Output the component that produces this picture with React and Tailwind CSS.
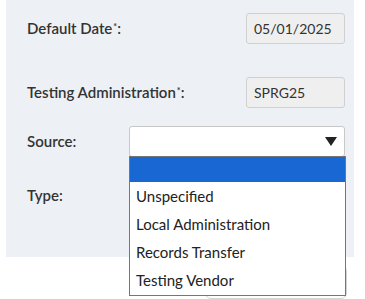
import React from 'react';

const options = ['Unspecified', 'Local Administration', 'Records Transfer', 'Testing Vendor'];

const Label = ({ children, star }) => (
  <span className="text-[15px] font-semibold text-[#333]">
    {children}
    {star && <sup className="text-[9px] ml-[1px]">*</sup>}:
  </span>
);

export default function App() {
  return (
    <div className="relative w-[365px] h-[299px] bg-white overflow-hidden font-['Lato',sans-serif]">
      {/* Form panel */}
      <div className="ml-[6px] w-[348px] h-[257px] bg-[#edf1f5] pl-[21px] pr-[9px]">
        <div className="flex items-center justify-between pt-[13px] h-[44px]">
          <Label star>Default Date</Label>
          <div className="w-[99px] h-[31px] flex items-center px-[7px] rounded-[3px] border border-[#d0d0d0] bg-[#efefef] text-[14px] text-[#333]">
            05/01/2025
          </div>
        </div>
        <div className="flex items-center justify-between mt-[33px] h-[31px]">
          <Label star>Testing Administration</Label>
          <div className="w-[99px] h-[31px] flex items-center px-[7px] rounded-[3px] border border-[#d0d0d0] bg-[#efefef] text-[14px] text-[#333]">
            SPRG25
          </div>
        </div>
        <div className="flex items-center justify-between mt-[18px] h-[31px]">
          <Label>Source</Label>
          <div className="w-[216px] h-[31px] flex items-center justify-end pr-[7px] rounded-[3px] border border-[#c8c8c8] bg-white">
            <svg width="12" height="9" viewBox="0 0 12 9">
              <path d="M0 0 H12 L6 9 Z" fill="#222" />
            </svg>
          </div>
        </div>
        <div className="flex items-center h-[31px] mt-[23px]">
          <Label>Type</Label>
        </div>
      </div>

      {/* Button partially behind the open list */}
      <div className="ml-[205px] mt-[8px] w-[142px] h-[34px] rounded-[6px] border border-[#d4d4d4] bg-white" />

      {/* Open select list */}
      <div className="absolute left-[129px] top-[156px] w-[217px] h-[140px] border border-[#767676] bg-white text-[15px] text-[#222]">
        <div className="h-[25px] bg-[#1967d2]" />
        {options.map((o) => (
          <div key={o} className="h-[28px] flex items-center px-[6px]">
            {o}
          </div>
        ))}
      </div>
    </div>
  );
}
